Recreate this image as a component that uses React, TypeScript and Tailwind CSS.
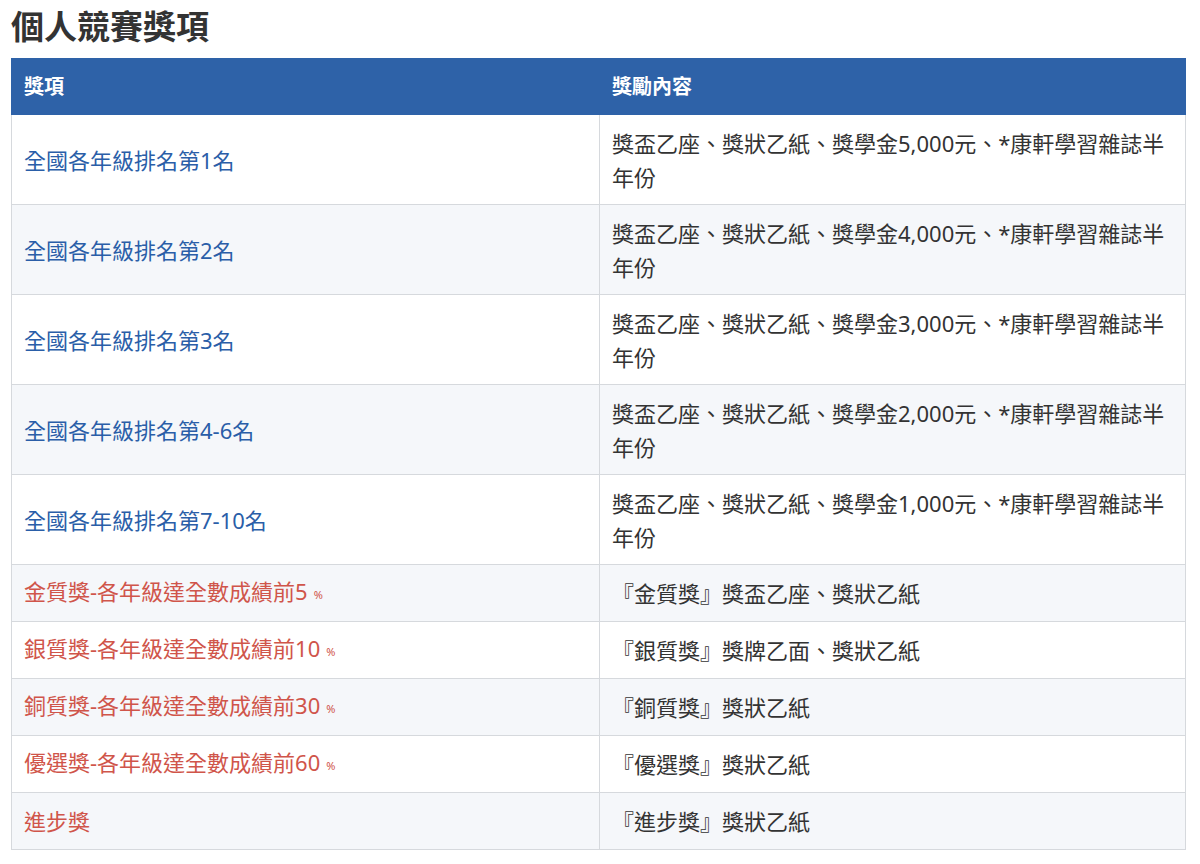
import React from 'react';

type Row = { name: string; pct?: string; reward: string; red?: boolean };

const rows: Row[] = [
  { name: '全國各年級排名第1名', reward: '獎盃乙座、獎狀乙紙、獎學金5,000元、*康軒學習雜誌半年份' },
  { name: '全國各年級排名第2名', reward: '獎盃乙座、獎狀乙紙、獎學金4,000元、*康軒學習雜誌半年份' },
  { name: '全國各年級排名第3名', reward: '獎盃乙座、獎狀乙紙、獎學金3,000元、*康軒學習雜誌半年份' },
  { name: '全國各年級排名第4-6名', reward: '獎盃乙座、獎狀乙紙、獎學金2,000元、*康軒學習雜誌半年份' },
  { name: '全國各年級排名第7-10名', reward: '獎盃乙座、獎狀乙紙、獎學金1,000元、*康軒學習雜誌半年份' },
  { name: '金質獎-各年級達全數成績前5', pct: '%', reward: '『金質獎』獎盃乙座、獎狀乙紙', red: true },
  { name: '銀質獎-各年級達全數成績前10', pct: '%', reward: '『銀質獎』獎牌乙面、獎狀乙紙', red: true },
  { name: '銅質獎-各年級達全數成績前30', pct: '%', reward: '『銅質獎』獎狀乙紙', red: true },
  { name: '優選獎-各年級達全數成績前60', pct: '%', reward: '『優選獎』獎狀乙紙', red: true },
  { name: '進步獎', reward: '『進步獎』獎狀乙紙', red: true },
];

const App: React.FC = () => {
  return (
    <div
      className="bg-white px-[11px] pt-[4px] text-[#333]"
      style={{ fontFamily: '"Noto Sans", "Noto Sans CJK TC", sans-serif' }}
    >
      <h2 className="text-[33px] font-bold leading-[46px] mb-[8px] text-[#333]">個人競賽獎項</h2>
      <table className="w-[1175px] border-collapse text-[22px]">
        <thead>
          <tr className="bg-[#2e62a8] text-white h-[56px]">
            <th className="w-[588px] text-left font-bold text-[20px] px-[12px] border border-[#2e62a8]">獎項</th>
            <th className="text-left font-bold text-[20px] px-[12px] border border-[#2e62a8]">獎勵內容</th>
          </tr>
        </thead>
        <tbody>
          {rows.map((r, i) => (
            <tr key={i} className={i % 2 === 1 ? 'bg-[#f5f7fa]' : 'bg-white'}>
              <td
                className={`border border-[#d6d9dd] px-[12px] leading-[34px] ${r.red ? 'text-[#d0554a] h-[57px]' : 'text-[#2a5ea8] h-[90px]'}`}
              >
                {r.name}
                {r.pct && <span className="text-[11px] ml-[6px] align-middle">%</span>}
              </td>
              <td className="border border-[#d6d9dd] px-[12px] py-[10px] leading-[34px] text-[#333]">
                {r.reward}
              </td>
            </tr>
          ))}
        </tbody>
      </table>
    </div>
  );
};

export default App;
